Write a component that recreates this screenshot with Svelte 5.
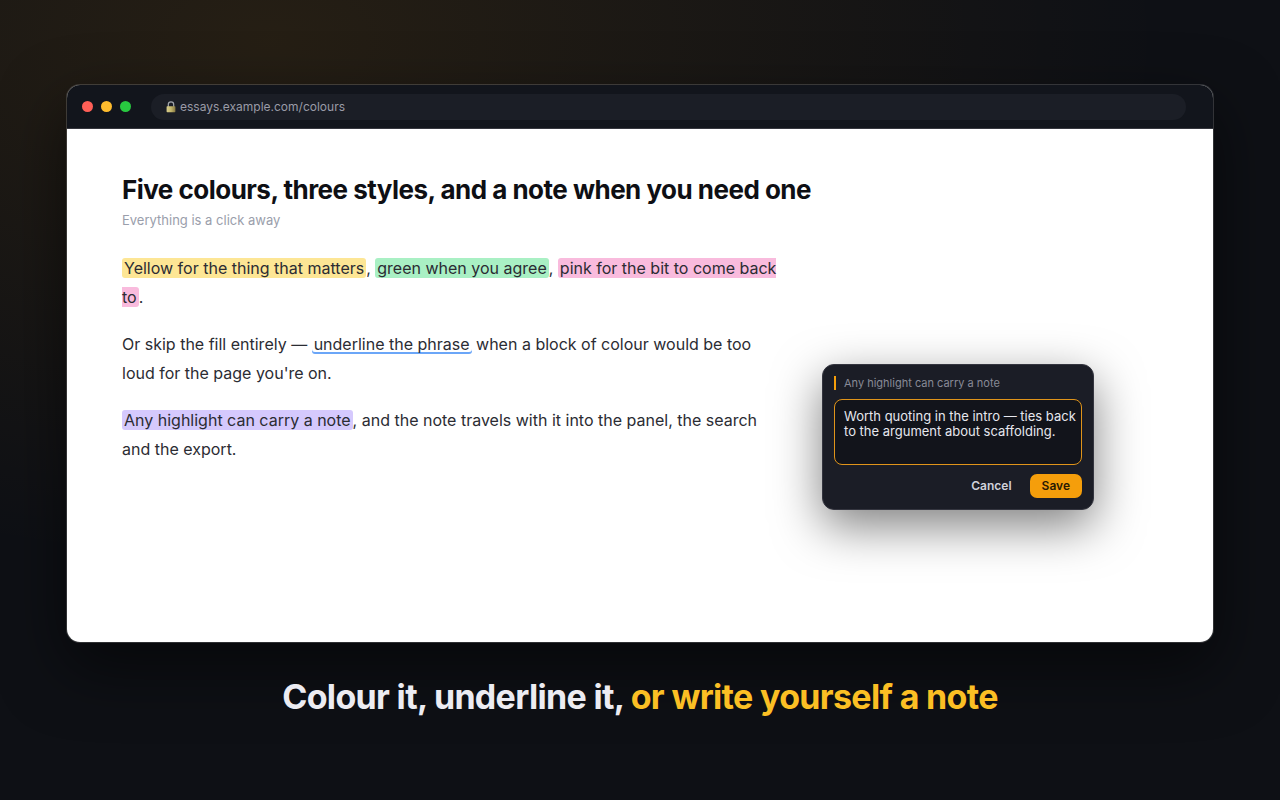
<script>
  let url = "essays.example.com/colours";
  let quote = "Any highlight can carry a note";
  let note =
    "Worth quoting in the intro — ties back to the argument about scaffolding.";
  let lights = ["red", "amber", "green"];
</script>

<style>
  :global(body) {
    background: #0e0f14;
  }
  .Stage {
    box-sizing: border-box;
    min-height: 100vh;
    padding: 34px 66px 32px;
    display: flex;
    flex-direction: column;
    justify-content: center;
    gap: 33px;
    font-family: Inter, "Liberation Sans", sans-serif;
    background:
      radial-gradient(ellipse 70% 66% at 21% 5%, rgba(245, 158, 11, 0.1), transparent),
      #0e1015;
  }
  .Window {
    position: relative;
    border: 1px solid rgba(255, 255, 255, 0.16);
    border-radius: 14px;
    background: #fff;
    background-clip: padding-box;
    box-shadow: 0 24px 64px rgba(0, 0, 0, 0.55);
  }
  .Toolbar {
    display: flex;
    align-items: center;
    gap: 20px;
    height: 43px;
    padding: 0 27px 0 15px;
    border-bottom: 1px solid #35363d;
    border-radius: 13px 13px 0 0;
    background: #12151c;
  }
  .Lights {
    display: flex;
    gap: 8px;
  }
  .Light {
    width: 11px;
    height: 11px;
    border-radius: 50%;
  }
  .red {
    background: #ff5f57;
  }
  .amber {
    background: #febc2e;
  }
  .green {
    background: #28c840;
  }
  .Address {
    flex: 1;
    display: flex;
    align-items: center;
    gap: 4px;
    height: 26px;
    padding: 0 15px;
    border-radius: 13px;
    background: #1b1e26;
  }
  .Address svg {
    width: 10px;
    height: 12px;
  }
  .Address input {
    flex: 1;
    padding: 0;
    border: 0;
    outline: 0;
    background: none;
    color: #9a9ba6;
    font: 400 12px/16px Inter, sans-serif;
  }
  .Article {
    box-sizing: border-box;
    min-height: 513px;
    padding: 44px 55px;
  }
  .Article h1 {
    margin: 0;
    color: #0e0f14;
    font-size: 26px;
    font-weight: 700;
    line-height: 34px;
    letter-spacing: -0.02em;
  }
  .Article .Byline {
    margin: 4px 0 25px;
    color: #9a9eab;
    font-size: 13px;
    line-height: 18px;
  }
  .Article p {
    max-width: 660px;
    margin: 0 0 18px;
    color: #2b2c33;
    font-size: 16px;
    line-height: 29px;
  }
  mark {
    padding: 0 2px;
    border-radius: 3px;
    color: inherit;
  }
  .yellow {
    background: #fde695;
  }
  .mint {
    background: #a9f0c4;
  }
  .pink {
    background: #f9bbdd;
  }
  .violet {
    background: #d5c9fd;
  }
  .underline {
    background: none;
    box-shadow: inset 0 -2px #6ba6f8;
  }
  .Note {
    position: absolute;
    top: 279px;
    right: 119px;
    box-sizing: border-box;
    width: 272px;
    padding: 11px;
    border: 1px solid #34353f;
    border-radius: 12px;
    background: #1b1d26;
    box-shadow: 0 16px 48px rgba(0, 0, 0, 0.5);
  }
  .Note label {
    display: block;
    margin-bottom: 9px;
    padding-left: 8px;
    border-left: 2px solid #f59e0b;
    color: #888a96;
    font-size: 11px;
    line-height: 14px;
  }
  .Note textarea {
    display: block;
    box-sizing: border-box;
    width: 100%;
    height: 66px;
    padding: 9px 3px 9px 9px;
    border: 1px solid #e0941a;
    border-radius: 8px;
    outline: 0;
    resize: none;
    background: #12141b;
    color: #e6e7ee;
    font: 400 13px/15px Inter, sans-serif;
  }
  .Buttons {
    display: flex;
    justify-content: flex-end;
    gap: 6px;
    margin-top: 9px;
  }
  .Buttons button {
    height: 24px;
    padding: 0 12px;
    border: 0;
    border-radius: 7px;
    background: none;
    color: #d0d1da;
    font: 600 12px/16px Inter, sans-serif;
    cursor: pointer;
  }
  .Buttons .Save {
    background: #f59e0b;
    color: #2a1a03;
  }
  .Caption {
    z-index: 1;
    margin: 0;
    color: #ececf2;
    font-size: 34px;
    font-weight: 700;
    line-height: 42px;
    letter-spacing: -0.02em;
    text-align: center;
  }
  .Caption span {
    color: #fbbf24;
  }
</style>

<svelte:head>
  <title>Colour it, underline it</title>
</svelte:head>

<main class="Stage">
  <section class="Window">
    <div class="Toolbar">
      <div class="Lights">
        {#each lights as light}
          <div class="Light {light}"></div>
        {/each}
      </div>
      <div class="Address">
        <svg viewBox="0 0 10 12" aria-hidden="true">
          <defs>
            <linearGradient id="brass">
              <stop offset="0" stop-color="#d8cd8c" />
              <stop offset="0.5" stop-color="#c4b76c" />
              <stop offset="1" stop-color="#857640" />
            </linearGradient>
          </defs>
          <path d="M2.3 6V3.6a2.7 2.7 0 0 1 5.4 0V6" fill="none" stroke="#a3a7ad" stroke-width="1.2" />
          <rect x="0.6" y="5.2" width="8.8" height="6" rx="0.7" fill="url(#brass)" />
        </svg>
        <input type="text" aria-label="Address" bind:value={url} />
      </div>
    </div>

    <article class="Article">
      <h1>Five colours, three styles, and a note when you need one</h1>
      <div class="Byline">Everything is a click away</div>
      <p>
        <mark class="yellow">Yellow for the thing that matters</mark>,
        <mark class="mint">green when you agree</mark>,
        <mark class="pink">pink for the bit to come back to</mark>.
      </p>
      <p>
        Or skip the fill entirely —
        <mark class="underline">underline the phrase</mark>
        when a block of colour would be too loud for the page you're on.
      </p>
      <p>
        <mark class="violet">{quote}</mark>, and the note travels with it into
        the panel, the search and the export.
      </p>
    </article>

    <form class="Note" on:submit|preventDefault>
      <label for="note">{quote}</label>
      <textarea id="note" spellcheck="false" bind:value={note}></textarea>
      <div class="Buttons">
        <button type="button">Cancel</button>
        <button type="submit" class="Save">Save</button>
      </div>
    </form>
  </section>

  <h2 class="Caption">
    Colour it, underline it, <span>or write yourself a note</span>
  </h2>
</main>
